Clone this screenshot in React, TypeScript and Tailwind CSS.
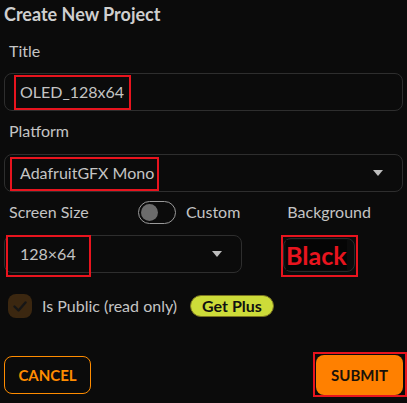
const font = { fontFamily: "Lato, 'Noto Sans', sans-serif" };

const Caret = () => (
  <svg width="10" height="6" viewBox="0 0 10 6" className="text-[#bdbdbd]">
    <path d="M0 0h10L5 6z" fill="currentColor" />
  </svg>
);

const Mark = ({ className }: { className: string }) => (
  <span className={`pointer-events-none absolute border-2 border-[#e8141e] ${className}`} />
);

const App = () => {
  return (
    <div style={font} className="h-[403px] w-[407px] overflow-hidden bg-[#0b0b0b] px-[4px] text-[#c4c4c4]">
      <h1 className="h-[28px] text-[18px] font-bold leading-[28px] text-[#cfcfcf]">Create New Project</h1>

      <div className="mt-[11px] pl-[5px] text-[16px] leading-6">Title</div>
      <div className="relative mt-[10px] flex h-[38px] items-center rounded-[8px] border border-[#2e2e2e] pl-[15px] text-[16px]">
        OLED_128x64
        <Mark className="left-[9px] top-[1px] h-[35px] w-[117px]" />
      </div>

      <div className="mt-[8px] pl-[5px] text-[16px] leading-6">Platform</div>
      <div className="relative mt-[11px] flex h-[38px] items-center justify-between rounded-[8px] border border-[#2e2e2e] pl-[15px] pr-[19px] text-[16px]">
        AdafruitGFX Mono
        <Caret />
        <Mark className="left-[5px] top-[2px] h-[34px] w-[149px]" />
      </div>

      <div className="mt-[8px] flex h-[24px] items-center text-[16px]">
        <span className="w-[134px] pl-[5px]">Screen Size</span>
        <span className="flex h-[23px] w-[38px] items-center rounded-full border-[1.5px] border-[#9a9a9a] px-[2px]">
          <span className="h-[17px] w-[17px] rounded-full bg-[#6b6b6b]" />
        </span>
        <span className="ml-[10px]">Custom</span>
        <span className="ml-[47px]">Background</span>
      </div>

      <div className="mt-[11px] flex items-start">
        <div className="relative flex h-[38px] w-[238px] items-center justify-between rounded-[8px] border border-[#2e2e2e] pl-[15px] pr-[19px] text-[16px]">
          128×64
          <Caret />
          <Mark className="left-[1px] top-[-1px] h-[42px] w-[85px]" />
        </div>
        <div className="relative ml-[41px] mt-[3px] flex h-[34px] w-[72px] items-center rounded-[8px] border border-[#2a2a2a] pl-[2px]">
          <span className="bg-[#050505] text-[25px] font-bold leading-[30px] text-[#e8141e]">Black</span>
          <Mark className="left-[-3px] top-[-4px] h-[42px] w-[77px]" />
        </div>
      </div>

      <div className="mt-[21px] flex items-center pl-[4px] text-[16px]">
        <span className="flex h-[24px] w-[24px] items-center justify-center rounded-[8px] bg-[#3b2710]">
          <svg width="14" height="11" viewBox="0 0 14 11" fill="none">
            <path d="M1.5 5.5l4 4L12.5 1.5" stroke="#161616" strokeWidth="2.4" strokeLinecap="round" strokeLinejoin="round" />
          </svg>
        </span>
        <span className="ml-[10px]">Is Public (read only)</span>
        <span className="ml-[13px] flex h-[22px] items-center rounded-full border border-[#7a7420] bg-[#cddc39] px-[11px] text-[16px] font-bold text-[#111]">
          Get Plus
        </span>
      </div>

      <div className="mt-[37px] flex items-center justify-between">
        <button className="h-[38px] w-[87px] rounded-[8px] border border-[#ff8c00] text-[15px] font-bold text-[#ff8c00]">
          CANCEL
        </button>
        <div className="relative">
          <button className="h-[40px] w-[87px] rounded-[8px] bg-[#ff8000] text-[15px] font-bold text-[#1a1209]">
            SUBMIT
          </button>
          <Mark className="left-[-3px] top-[-3px] h-[45px] w-[94px]" />
        </div>
      </div>
    </div>
  );
};

export default App;
